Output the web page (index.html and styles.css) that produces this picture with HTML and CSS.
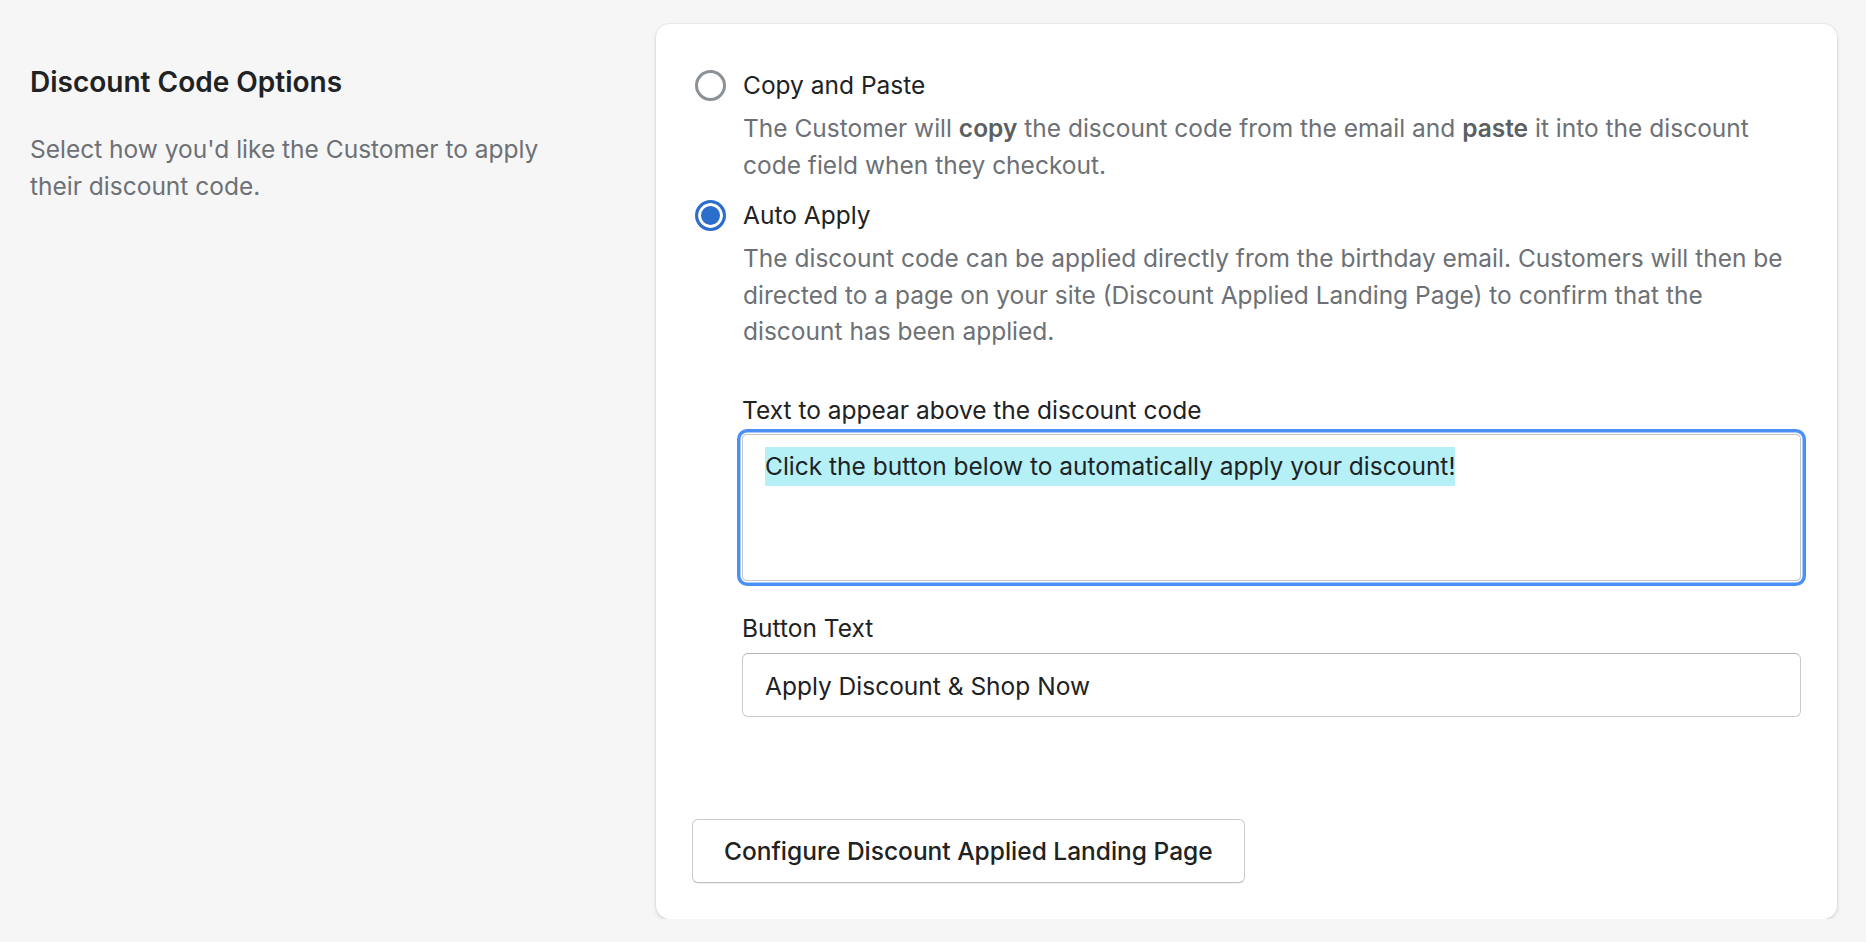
FILE: index.html
```html
<!DOCTYPE html>
<html lang="en">
<head>
    <meta charset="UTF-8">
    <meta name="viewport" content="width=device-width, initial-scale=1.0">
    <title>Discount Code Options</title>
    <link rel="stylesheet" href="styles.css">
</head>
<body>
    <div class="layout">
        <div class="annotation">
            <h2 class="annotation-title">Discount Code Options</h2>
            <p class="annotation-desc">Select how you'd like the Customer to apply their discount code.</p>
        </div>

        <div class="card">
            <div class="choice">
                <span class="radio"></span>
                <span class="choice-label">Copy and Paste</span>
            </div>
            <p class="choice-help">The Customer will <b>copy</b> the discount code from the email and <b>paste</b> it into the discount<br>code field when they checkout.</p>

            <div class="choice choice-second">
                <span class="radio checked"></span>
                <span class="choice-label">Auto Apply</span>
            </div>
            <p class="choice-help">The discount code can be applied directly from the birthday email. Customers will then be directed to a page on your site (Discount Applied Landing Page) to confirm that the discount has been applied.</p>

            <div class="children">
                <label class="field-label">Text to appear above the discount code</label>
                <div class="textarea focused"><span class="selected">Click the button below to automatically apply your discount!</span></div>

                <label class="field-label second" for="buttonText">Button Text</label>
                <input type="text" id="buttonText" class="text-input" value="Apply Discount &amp; Shop Now">
            </div>

            <button class="btn">Configure Discount Applied Landing Page</button>
        </div>
    </div>
</body>
</html>
```

FILE: styles.css
```css
* {
    margin: 0;
    padding: 0;
    box-sizing: border-box;
}

body {
    font-family: Inter, Roboto, "Noto Sans", sans-serif;
    font-size: 24.5px;
    line-height: 36.5px;
    color: #202223;
    background-color: #f6f6f7;
}

.layout {
    display: flex;
    align-items: flex-start;
    padding: 24px 29px 0 30px;
}

.annotation {
    width: 560px;
    flex-shrink: 0;
    margin-right: 66px;
    padding-top: 37px;
}

.annotation-title {
    font-size: 28px;
    line-height: 43px;
    font-weight: 600;
    color: #202223;
}

.annotation-desc {
    margin-top: 27px;
    color: #6d7175;
}

.card {
    flex: 1;
    background-color: #ffffff;
    border-radius: 14px;
    padding: 43px 36px 36px;
    box-shadow: 0 0 0 1px rgba(63, 63, 68, 0.05), 0 2px 4px rgba(63, 63, 68, 0.15);
}

.choice {
    display: flex;
    align-items: center;
    gap: 17px;
    margin-left: 3px;
    height: 36px;
}

.choice-second {
    margin-top: 14px;
}

.radio {
    width: 31px;
    height: 31px;
    border-radius: 50%;
    border: 3px solid #8c9196;
    background: #fff;
    flex-shrink: 0;
}

.radio.checked {
    border-color: #2c6ecb;
    background: #2c6ecb;
    box-shadow: inset 0 0 0 3px #fff;
}

.choice-help {
    margin-top: 7px;
    padding-left: 51px;
    color: #6d7175;
}

.choice-help b {
    font-weight: 600;
    color: #5c5f62;
}

.children {
    padding-left: 50px;
    margin-top: 42px;
}

.field-label {
    display: block;
    color: #202223;
}

.field-label.second {
    margin-top: 29px;
}

.textarea {
    margin-top: 6px;
    height: 147px;
    border: 1px solid #c4c6c8;
    border-radius: 5px;
    padding: 10px 22px 9px;
    line-height: 43px;
}

.textarea.focused {
    box-shadow: 0 0 0 1.5px #fff, 0 0 0 5px #4b90f8;
}

.selected {
    background-color: #b5f0f7;
    padding: 4px 0 5px;
}

.text-input {
    display: block;
    width: 100%;
    margin-top: 6px;
    height: 64px;
    padding: 3px 22px 0;
    font-family: inherit;
    font-size: 24.5px;
    color: #202223;
    border: 1px solid #c9cccf;
    border-top-color: #aeb4b9;
    border-radius: 6px;
    background: #fff;
    outline: none;
}

.btn {
    display: block;
    margin-top: 102px;
    height: 64px;
    padding: 0 31px;
    font-family: inherit;
    font-size: 24.5px;
    font-weight: 500;
    color: #202223;
    background: #fff;
    border: 1px solid #c9cccf;
    border-bottom-color: #babfc3;
    border-radius: 6px;
    box-shadow: 0 1px 0 rgba(0, 0, 0, 0.05);
    cursor: pointer;
}
```
